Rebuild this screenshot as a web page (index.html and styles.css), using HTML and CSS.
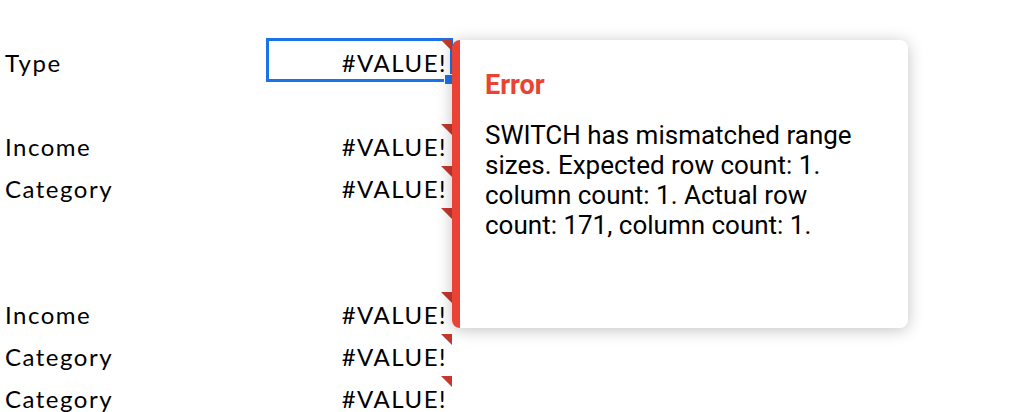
FILE: index.html
```html
<!doctype html>
<html lang="en">
	<head>
		<meta charset="UTF-8" />
		<meta name="viewport" content="width=device-width, initial-scale=1.0" />
		<title>Sheet</title>
		<link rel="stylesheet" href="styles.css">
	</head>
	<body>
		<div class="sheet">
			<div class="row">
				<div class="cell label">Type</div>
				<div class="cell value error selected">#VALUE!<span class="handle"></span></div>
			</div>
			<div class="row">
				<div class="cell label"></div>
				<div class="cell value"></div>
			</div>
			<div class="row">
				<div class="cell label">Income</div>
				<div class="cell value error">#VALUE!</div>
			</div>
			<div class="row">
				<div class="cell label">Category</div>
				<div class="cell value error">#VALUE!</div>
			</div>
			<div class="row">
				<div class="cell label"></div>
				<div class="cell value error"></div>
			</div>
			<div class="row">
				<div class="cell label"></div>
				<div class="cell value"></div>
			</div>
			<div class="row">
				<div class="cell label">Income</div>
				<div class="cell value error">#VALUE!</div>
			</div>
			<div class="row">
				<div class="cell label">Category</div>
				<div class="cell value error">#VALUE!</div>
			</div>
			<div class="row">
				<div class="cell label">Category</div>
				<div class="cell value error">#VALUE!</div>
			</div>

			<div class="tooltip">
				<div class="tooltip-title">Error</div>
				<p class="tooltip-text">SWITCH has mismatched range sizes. Expected row count: 1. column count: 1. Actual row count: 171, column count: 1.</p>
			</div>
		</div>
	</body>
</html>
```

FILE: styles.css
```css
* {
	margin: 0;
	padding: 0;
	box-sizing: border-box;
}

body {
	background: #ffffff;
	font-family: Lato, "Open Sans", sans-serif;
	color: #000000;
	overflow: hidden;
}

.sheet {
	position: relative;
	padding-top: 40px;
}

.row {
	display: flex;
	height: 42px;
}

.cell {
	position: relative;
	display: flex;
	align-items: center;
	font-size: 24px;
	letter-spacing: 1.5px;
	line-height: 1;
	padding-top: 4px;
}

.label {
	width: 266px;
	padding-left: 5px;
}

.value {
	width: 187px;
	justify-content: flex-end;
	padding-right: 6px;
}

/* error marker in the top right corner */
.value.error::after {
	content: "";
	position: absolute;
	top: 0;
	right: 1px;
	border-style: solid;
	border-width: 0 11px 11px 0;
	border-color: transparent #c4392d transparent transparent;
}

.value.selected::before {
	content: "";
	position: absolute;
	top: -2px;
	left: 0;
	right: 0;
	bottom: 0;
	border: 3px solid #1a73e8;
}

.handle {
	position: absolute;
	right: -1px;
	bottom: -2px;
	width: 10px;
	height: 10px;
	background: #1a73e8;
	border-top: 1px solid #ffffff;
	border-left: 1px solid #ffffff;
}

.tooltip {
	position: absolute;
	left: 452px;
	top: 40px;
	width: 456px;
	height: 288px;
	background: #ffffff;
	border-left: 8px solid #ea4335;
	border-radius: 8px;
	box-shadow: 0 2px 16px rgba(0, 0, 0, 0.24);
	padding: 30px 30px 0 25px;
	font-family: Roboto, sans-serif;
}

.tooltip-title {
	color: #ea4335;
	font-size: 27px;
	font-weight: 700;
	line-height: 30px;
	margin-bottom: 20px;
}

.tooltip-text {
	font-size: 26px;
	line-height: 30px;
	color: #000000;
}
```
